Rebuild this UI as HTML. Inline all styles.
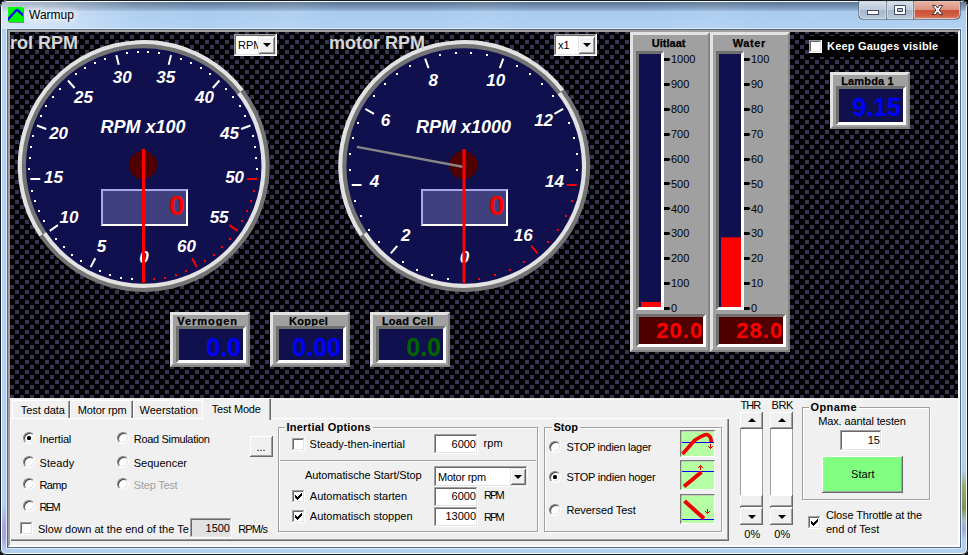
<!DOCTYPE html>
<html><head><meta charset="utf-8"><title>Warmup</title>
<style>
*{box-sizing:border-box;margin:0;padding:0}
html,body{width:968px;height:555px;overflow:hidden;background:#000}
body{font-family:"Liberation Sans",Arial,sans-serif;font-size:11px;color:#000;position:relative}
.abs,.abs *{position:absolute}
#win{position:absolute;left:0;top:0;width:968px;height:555px;border-radius:7px 7px 6px 6px;background:#b2d1f1;overflow:hidden;
 box-shadow:inset 0 0 0 1px #141c26, inset 0 0 0 2px #f8fbfe}
#tbar{position:absolute;left:2px;top:2px;width:964px;height:27px;
 background:linear-gradient(180deg,#5b7595 0,#6a85a6 3px,#7f9bbc 6px,#8eabcd 8px,#a8caee 9.5px,#afd0f2 27px)}
#tbarx{position:absolute;left:2px;top:2px;width:964px;height:27px;
 background:linear-gradient(100deg,rgba(255,255,255,.5) 0,rgba(255,255,255,.42) 50px,rgba(255,255,255,.1) 130px,rgba(255,255,255,.02) 200px,rgba(255,255,255,.1) 290px,rgba(255,255,255,0) 330px,rgba(255,255,255,0) 420px,rgba(255,255,255,.08) 480px,rgba(255,255,255,0) 520px,rgba(255,255,255,0) 640px,rgba(255,255,255,.08) 700px,rgba(255,255,255,0) 760px,rgba(255,255,255,.05) 964px)}
#title{position:absolute;left:29px;top:8px;font-size:12px;color:#000;text-shadow:0 0 6px #fff,0 0 8px #fff,0 0 10px #fff}
#client{position:absolute;left:7px;top:29px;width:954px;height:519px;background:#f0f0f0;border:1px solid #566a80;box-shadow:0 0 0 1px #dceafa}
#cedge{position:absolute;left:8px;top:30px;width:952px;height:517px;border-style:solid;border-width:2px;border-color:#a0a0a0 #fff #fff #a0a0a0}
#gp{position:absolute;left:10px;top:32px;width:948px;height:366px;background:#000;overflow:hidden}
.gsvg{position:absolute;left:0;top:0}
.gl{font:italic bold 18px "Liberation Sans",Arial,sans-serif;fill:#fff}
.gn{font:italic bold 17px "Liberation Sans",Arial,sans-serif;fill:#fff}
.lcd{font:bold 28px "Liberation Sans",Arial,sans-serif;fill:#ff0000}
.pt{font:bold 11px "Liberation Sans",Arial,sans-serif;fill:#000;stroke:#000;stroke-width:.25px}
.sc{font:11px "Liberation Sans",Arial,sans-serif;fill:#000}
.rl{font:bold 22px "Liberation Sans",Arial,sans-serif;fill:#ff0000;letter-spacing:1px}
.dv{font-weight:bold;font-family:"Liberation Sans",Arial,sans-serif}
.gt{position:absolute;font-weight:bold;font-size:18px;line-height:20px;color:#d6d6d6;white-space:nowrap}
.combo{position:absolute;width:43px;height:22px;background:#fff;box-shadow:inset -1px -1px 0 #fff, inset 1px 1px 0 #a0a0a0, inset -2px -2px 0 #e3e3e3, inset 2px 2px 0 #696969;overflow:hidden}
.combo span{position:absolute;left:4px;top:5px;font-size:11px;line-height:13px;white-space:nowrap}
.cbtn{position:absolute;right:2px;top:2px;width:17px;bottom:2px;background:#f0f0f0;box-shadow:inset 1px 1px 0 #e3e3e3, inset -1px -1px 0 #696969, inset 2px 2px 0 #fff, inset -2px -2px 0 #a0a0a0}
.cbtn i{position:absolute;left:5px;top:7px;width:0;height:0;border:4px solid transparent;border-top:4px solid #000;border-bottom:0}
.chk{position:absolute;width:13px;height:13px;background:#fff;box-shadow:inset -1px -1px 0 #fff, inset 1px 1px 0 #a0a0a0, inset -2px -2px 0 #e3e3e3, inset 2px 2px 0 #696969}

.t{position:absolute;font-size:11px;line-height:13px;white-space:nowrap;color:#000}
.t.b{font-weight:bold}
.t.dis{color:#a0a0a0}
.rad{position:absolute;width:12px;height:12px;border-radius:50%;background:#fff;border:1px solid;border-color:#808080 #fff #fff #808080;box-shadow:inset 1px 1px 0 #404040, inset -1px -1px 0 #e3e3e3;transform:rotate(0deg)}
.rad i{position:absolute;left:3px;top:3px;width:4px;height:4px;background:#000;border-radius:1.5px}
.edit{position:absolute;box-shadow:inset -1px -1px 0 #fff, inset 1px 1px 0 #a0a0a0, inset -2px -2px 0 #e3e3e3, inset 2px 2px 0 #696969}
.grp{position:absolute;border:1px solid #a0a0a0;box-shadow:inset 1px 1px 0 #fff, 1px 1px 0 #fff}
.sep{position:absolute;height:2px;border-top:1px solid #a0a0a0;border-bottom:1px solid #fff}
.btn{position:absolute;background:#f0f0f0;box-shadow:inset -1px -1px 0 #696969, inset 1px 1px 0 #fff, inset -2px -2px 0 #a0a0a0}
.btn i{position:absolute;width:0;height:0;border:4px solid transparent}
.btn i.up{border-bottom:4px solid #000;border-top:0}
.btn i.dn{border-top:4px solid #000;border-bottom:0}
#tabbody{position:absolute;left:10px;top:418px;width:719px;height:123px;box-shadow:inset 1px 1px 0 #fff, inset -1px -1px 0 #696969, inset -2px -2px 0 #a0a0a0}
.tab{position:absolute;background:#f0f0f0;box-shadow:inset 1px 1px 0 #fff, inset -1px 0 0 #696969, inset -2px 0 0 #a0a0a0}
.tab.sel{}
</style></head><body>
<div id="win">
<div id="tbar"></div><div id="tbarx"></div>
<div id="title">Warmup</div>
<div id="client"></div>
<div id="cedge"></div>
<svg class="gsvg" width="968" height="555" viewBox="0 0 968 555">
<defs><pattern id="cf" x="0" y="0" width="10" height="10" patternUnits="userSpaceOnUse">
<rect x="5" y="0" width="4" height="4" fill="#363652"/><rect x="0" y="5" width="4" height="4" fill="#363652"/></pattern></defs>
<rect x="10" y="32" width="948" height="366" fill="#000"/>
<rect x="10" y="32" width="948" height="366" fill="url(#cf)"/>
</svg>
<svg class="gsvg" width="968" height="555" viewBox="0 0 968 555">
<path d="M243.80 89.47 A126 126 0 0 0 39.49 236.82 Z" fill="#e2e2e2"/>
<path d="M243.80 89.47 A126 126 0 1 1 39.49 236.82 Z" fill="#747474"/>
<path d="M240.54 91.96 A121.9 121.9 0 0 0 42.88 234.52 Z" fill="#747474"/>
<path d="M240.54 91.96 A121.9 121.9 0 1 1 42.88 234.52 Z" fill="#e2e2e2"/>
<circle cx="143.7" cy="166.0" r="117.8" fill="#10104e"/>
<rect x="131" y="278" width="2" height="2" fill="#ffffff"/>
<rect x="120" y="277" width="2" height="2" fill="#ffffff"/>
<rect x="109" y="274" width="2" height="2" fill="#ffffff"/>
<rect x="99" y="270" width="2" height="2" fill="#ffffff"/>
<line x1="95.28" y1="258.26" x2="90.63" y2="267.12" stroke="#ffffff" stroke-width="2"/>
<rect x="80" y="260" width="2" height="2" fill="#ffffff"/>
<rect x="71" y="254" width="2" height="2" fill="#ffffff"/>
<rect x="63" y="246" width="2" height="2" fill="#ffffff"/>
<rect x="55" y="238" width="2" height="2" fill="#ffffff"/>
<line x1="57.95" y1="225.19" x2="49.72" y2="230.87" stroke="#ffffff" stroke-width="2"/>
<rect x="43" y="220" width="2" height="2" fill="#ffffff"/>
<rect x="38" y="210" width="2" height="2" fill="#ffffff"/>
<rect x="34" y="200" width="2" height="2" fill="#ffffff"/>
<rect x="31" y="190" width="2" height="2" fill="#ffffff"/>
<line x1="40.26" y1="179.00" x2="30.33" y2="179.00" stroke="#ffffff" stroke-width="2"/>
<rect x="28" y="168" width="2" height="2" fill="#ffffff"/>
<rect x="29" y="157" width="2" height="2" fill="#ffffff"/>
<rect x="30" y="146" width="2" height="2" fill="#ffffff"/>
<rect x="32" y="135" width="2" height="2" fill="#ffffff"/>
<line x1="46.27" y1="129.05" x2="36.92" y2="125.50" stroke="#ffffff" stroke-width="2"/>
<rect x="40" y="115" width="2" height="2" fill="#ffffff"/>
<rect x="45" y="105" width="2" height="2" fill="#ffffff"/>
<rect x="52" y="96" width="2" height="2" fill="#ffffff"/>
<rect x="59" y="88" width="2" height="2" fill="#ffffff"/>
<line x1="74.60" y1="88.01" x2="67.97" y2="80.52" stroke="#ffffff" stroke-width="2"/>
<rect x="75" y="73" width="2" height="2" fill="#ffffff"/>
<rect x="84" y="67" width="2" height="2" fill="#ffffff"/>
<rect x="94" y="62" width="2" height="2" fill="#ffffff"/>
<rect x="104" y="58" width="2" height="2" fill="#ffffff"/>
<line x1="118.76" y1="64.83" x2="116.37" y2="55.12" stroke="#ffffff" stroke-width="2"/>
<rect x="126" y="52" width="2" height="2" fill="#ffffff"/>
<rect x="137" y="51" width="2" height="2" fill="#ffffff"/>
<rect x="147" y="51" width="2" height="2" fill="#ffffff"/>
<rect x="158" y="52" width="2" height="2" fill="#ffffff"/>
<line x1="168.64" y1="64.83" x2="171.03" y2="55.12" stroke="#ffffff" stroke-width="2"/>
<rect x="180" y="58" width="2" height="2" fill="#ffffff"/>
<rect x="190" y="62" width="2" height="2" fill="#ffffff"/>
<rect x="200" y="67" width="2" height="2" fill="#ffffff"/>
<rect x="209" y="73" width="2" height="2" fill="#ffffff"/>
<line x1="212.80" y1="88.01" x2="219.43" y2="80.52" stroke="#ffffff" stroke-width="2"/>
<rect x="225" y="88" width="2" height="2" fill="#ffffff"/>
<rect x="232" y="96" width="2" height="2" fill="#ffffff"/>
<rect x="239" y="105" width="2" height="2" fill="#ffffff"/>
<rect x="244" y="115" width="2" height="2" fill="#ffffff"/>
<line x1="241.13" y1="129.05" x2="250.48" y2="125.50" stroke="#ffffff" stroke-width="2"/>
<rect x="252" y="135" width="2" height="2" fill="#ffffff"/>
<rect x="254" y="146" width="2" height="2" fill="#ffffff"/>
<rect x="255" y="157" width="2" height="2" fill="#ffffff"/>
<rect x="256" y="168" width="2" height="2" fill="#ffffff"/>
<line x1="247.14" y1="179.00" x2="257.07" y2="179.00" stroke="#ff0000" stroke-width="2"/>
<rect x="253" y="190" width="2" height="2" fill="#ff0000"/>
<rect x="250" y="200" width="2" height="2" fill="#ff0000"/>
<rect x="246" y="210" width="2" height="2" fill="#ff0000"/>
<rect x="241" y="220" width="2" height="2" fill="#ff0000"/>
<line x1="229.45" y1="225.19" x2="237.68" y2="230.87" stroke="#ff0000" stroke-width="2"/>
<rect x="229" y="238" width="2" height="2" fill="#ff0000"/>
<rect x="221" y="246" width="2" height="2" fill="#ff0000"/>
<rect x="213" y="254" width="2" height="2" fill="#ff0000"/>
<rect x="204" y="260" width="2" height="2" fill="#ff0000"/>
<line x1="192.12" y1="258.26" x2="196.77" y2="267.12" stroke="#ff0000" stroke-width="2"/>
<rect x="185" y="270" width="2" height="2" fill="#ff0000"/>
<rect x="175" y="274" width="2" height="2" fill="#ff0000"/>
<rect x="164" y="277" width="2" height="2" fill="#ff0000"/>
<rect x="153" y="278" width="2" height="2" fill="#ff0000"/>
<text x="144.0" y="262.8" text-anchor="middle" class="gn">0</text>
<text x="101.6" y="252.3" text-anchor="middle" class="gn">5</text>
<text x="68.9" y="223.4" text-anchor="middle" class="gn">10</text>
<text x="53.4" y="182.5" text-anchor="middle" class="gn">15</text>
<text x="58.6" y="139.1" text-anchor="middle" class="gn">20</text>
<text x="83.5" y="103.2" text-anchor="middle" class="gn">25</text>
<text x="122.2" y="82.9" text-anchor="middle" class="gn">30</text>
<text x="165.8" y="82.9" text-anchor="middle" class="gn">35</text>
<text x="204.5" y="103.2" text-anchor="middle" class="gn">40</text>
<text x="229.4" y="139.1" text-anchor="middle" class="gn">45</text>
<text x="234.6" y="182.5" text-anchor="middle" class="gn">50</text>
<text x="219.1" y="223.4" text-anchor="middle" class="gn">55</text>
<text x="186.4" y="252.3" text-anchor="middle" class="gn">60</text>
<text x="143" y="133.2" text-anchor="middle" class="gl">RPM x100</text>
<rect x="101" y="189.0" width="87" height="37" fill="#ffffff"/>
<path d="M101 189.0 h87 l-2 2 h-83 v33 l-2 2 Z" fill="#a8a8ee"/>
<rect x="103" y="191.0" width="83" height="33" fill="#40407e"/>
<text x="184.5" y="214.6" text-anchor="end" class="lcd">0</text>
<circle cx="143" cy="165.0" r="14" fill="#500000"/>
<path d="M142 149.0 h3 v133 l-1.5 2 l-1.5 -2 Z" fill="#ff0000"/>
<path d="M564.30 89.47 A126 126 0 0 0 359.99 236.82 Z" fill="#e2e2e2"/>
<path d="M564.30 89.47 A126 126 0 1 1 359.99 236.82 Z" fill="#747474"/>
<path d="M561.04 91.96 A121.9 121.9 0 0 0 363.38 234.52 Z" fill="#747474"/>
<path d="M561.04 91.96 A121.9 121.9 0 1 1 363.38 234.52 Z" fill="#e2e2e2"/>
<circle cx="464.2" cy="166.0" r="117.8" fill="#10104e"/>
<rect x="447" y="278" width="2" height="2" fill="#ffffff"/>
<rect x="431" y="274" width="2" height="2" fill="#ffffff"/>
<rect x="416" y="269" width="2" height="2" fill="#ffffff"/>
<rect x="402" y="261" width="2" height="2" fill="#ffffff"/>
<line x1="397.22" y1="245.82" x2="390.79" y2="253.48" stroke="#ffffff" stroke-width="2"/>
<rect x="378" y="241" width="2" height="2" fill="#ffffff"/>
<rect x="368" y="229" width="2" height="2" fill="#ffffff"/>
<rect x="360" y="215" width="2" height="2" fill="#ffffff"/>
<rect x="354" y="200" width="2" height="2" fill="#ffffff"/>
<line x1="361.58" y1="185.00" x2="351.73" y2="185.00" stroke="#ffffff" stroke-width="2"/>
<rect x="349" y="169" width="2" height="2" fill="#ffffff"/>
<rect x="349" y="153" width="2" height="2" fill="#ffffff"/>
<rect x="352" y="137" width="2" height="2" fill="#ffffff"/>
<rect x="357" y="122" width="2" height="2" fill="#ffffff"/>
<line x1="373.96" y1="113.90" x2="365.30" y2="108.90" stroke="#ffffff" stroke-width="2"/>
<rect x="373" y="95" width="2" height="2" fill="#ffffff"/>
<rect x="384" y="83" width="2" height="2" fill="#ffffff"/>
<rect x="396" y="73" width="2" height="2" fill="#ffffff"/>
<rect x="409" y="65" width="2" height="2" fill="#ffffff"/>
<line x1="428.56" y1="68.08" x2="425.14" y2="58.69" stroke="#ffffff" stroke-width="2"/>
<rect x="439" y="54" width="2" height="2" fill="#ffffff"/>
<rect x="455" y="52" width="2" height="2" fill="#ffffff"/>
<rect x="470" y="52" width="2" height="2" fill="#ffffff"/>
<rect x="486" y="54" width="2" height="2" fill="#ffffff"/>
<line x1="499.84" y1="68.08" x2="503.26" y2="58.69" stroke="#ffffff" stroke-width="2"/>
<rect x="516" y="65" width="2" height="2" fill="#ffffff"/>
<rect x="529" y="73" width="2" height="2" fill="#ffffff"/>
<rect x="541" y="83" width="2" height="2" fill="#ffffff"/>
<rect x="552" y="95" width="2" height="2" fill="#ffffff"/>
<line x1="554.44" y1="113.90" x2="563.10" y2="108.90" stroke="#ffffff" stroke-width="2"/>
<rect x="568" y="122" width="2" height="2" fill="#ffffff"/>
<rect x="573" y="137" width="2" height="2" fill="#ffffff"/>
<rect x="576" y="153" width="2" height="2" fill="#ffffff"/>
<rect x="576" y="169" width="2" height="2" fill="#ffffff"/>
<line x1="566.82" y1="185.00" x2="576.67" y2="185.00" stroke="#ff0000" stroke-width="2"/>
<rect x="571" y="200" width="2" height="2" fill="#ff0000"/>
<rect x="565" y="215" width="2" height="2" fill="#ff0000"/>
<rect x="557" y="229" width="2" height="2" fill="#ff0000"/>
<rect x="547" y="241" width="2" height="2" fill="#ff0000"/>
<line x1="531.18" y1="245.82" x2="537.61" y2="253.48" stroke="#ff0000" stroke-width="2"/>
<rect x="523" y="261" width="2" height="2" fill="#ff0000"/>
<rect x="509" y="269" width="2" height="2" fill="#ff0000"/>
<rect x="494" y="274" width="2" height="2" fill="#ff0000"/>
<rect x="478" y="278" width="2" height="2" fill="#ff0000"/>
<text x="464.5" y="262.8" text-anchor="middle" class="gn">0</text>
<text x="405.8" y="241.4" text-anchor="middle" class="gn">2</text>
<text x="374.6" y="187.4" text-anchor="middle" class="gn">4</text>
<text x="385.4" y="125.9" text-anchor="middle" class="gn">6</text>
<text x="433.3" y="85.7" text-anchor="middle" class="gn">8</text>
<text x="495.7" y="85.7" text-anchor="middle" class="gn">10</text>
<text x="543.6" y="125.8" text-anchor="middle" class="gn">12</text>
<text x="554.4" y="187.4" text-anchor="middle" class="gn">14</text>
<text x="523.2" y="241.4" text-anchor="middle" class="gn">16</text>
<text x="463.5" y="133.2" text-anchor="middle" class="gl">RPM x1000</text>
<rect x="421" y="189.0" width="87" height="37" fill="#ffffff"/>
<path d="M421 189.0 h87 l-2 2 h-83 v33 l-2 2 Z" fill="#a8a8ee"/>
<rect x="423" y="191.0" width="83" height="33" fill="#40407e"/>
<text x="504.5" y="214.6" text-anchor="end" class="lcd">0</text>
<circle cx="463.5" cy="165.0" r="14" fill="#500000"/>
<line x1="462.5" y1="166.7" x2="356.83" y2="146.93" stroke="#858585" stroke-width="2.4"/>
<path d="M462.5 149.0 h3 v133 l-1.5 2 l-1.5 -2 Z" fill="#ff0000"/>
<rect x="630" y="32" width="80" height="320" fill="#858585"/><path d="M630 32 h80 l-3 3 h-74 v314 l-3 3 Z" fill="#e3e3e3"/><rect x="633" y="35" width="75" height="315" fill="#a0a0a0"/>
<text x="651.8" y="47" textLength="33.7" lengthAdjust="spacing" class="pt">Uitlaat</text>
<rect x="636" y="51" width="28" height="259" fill="#ffffff"/><path d="M636 51 h28 l-3 3 h-22 v253 l-3 3 Z" fill="#707070"/><rect x="639" y="54" width="22" height="253" fill="#10104e"/>
<rect x="641" y="302.0" width="20" height="5.0" fill="#ff0000"/>
<path d="M664 307 h5 l1.5 1.5 l-1.5 1.5 h-5 Z" fill="#000"/>
<text x="671" y="312.1" class="sc">0</text>
<path d="M664 282 h5 l1.5 1.5 l-1.5 1.5 h-5 Z" fill="#000"/>
<text x="671" y="287.2" class="sc">100</text>
<path d="M664 257 h5 l1.5 1.5 l-1.5 1.5 h-5 Z" fill="#000"/>
<text x="671" y="262.3" class="sc">200</text>
<path d="M664 232 h5 l1.5 1.5 l-1.5 1.5 h-5 Z" fill="#000"/>
<text x="671" y="237.4" class="sc">300</text>
<path d="M664 207 h5 l1.5 1.5 l-1.5 1.5 h-5 Z" fill="#000"/>
<text x="671" y="212.5" class="sc">400</text>
<path d="M664 182 h5 l1.5 1.5 l-1.5 1.5 h-5 Z" fill="#000"/>
<text x="671" y="187.5" class="sc">500</text>
<path d="M664 158 h5 l1.5 1.5 l-1.5 1.5 h-5 Z" fill="#000"/>
<text x="671" y="162.6" class="sc">600</text>
<path d="M664 133 h5 l1.5 1.5 l-1.5 1.5 h-5 Z" fill="#000"/>
<text x="671" y="137.7" class="sc">700</text>
<path d="M664 108 h5 l1.5 1.5 l-1.5 1.5 h-5 Z" fill="#000"/>
<text x="671" y="112.8" class="sc">800</text>
<path d="M664 83 h5 l1.5 1.5 l-1.5 1.5 h-5 Z" fill="#000"/>
<text x="671" y="87.9" class="sc">900</text>
<path d="M664 58 h5 l1.5 1.5 l-1.5 1.5 h-5 Z" fill="#000"/>
<text x="671" y="63.0" class="sc">1000</text>
<rect x="636" y="314" width="70" height="33" fill="#ffffff"/><path d="M636 314 h70 l-3 3 h-64 v27 l-3 3 Z" fill="#707070"/><rect x="639" y="317" width="64" height="27" fill="#500000"/>
<text x="703.2" y="337.9" text-anchor="end" class="rl">20.0</text>
<rect x="710" y="32" width="80" height="320" fill="#858585"/><path d="M710 32 h80 l-3 3 h-74 v314 l-3 3 Z" fill="#e3e3e3"/><rect x="713" y="35" width="75" height="315" fill="#a0a0a0"/>
<text x="732.7" y="47" textLength="32.6" lengthAdjust="spacing" class="pt">Water</text>
<rect x="716" y="51" width="28" height="259" fill="#ffffff"/><path d="M716 51 h28 l-3 3 h-22 v253 l-3 3 Z" fill="#707070"/><rect x="719" y="54" width="22" height="253" fill="#10104e"/>
<rect x="721" y="237.3" width="20" height="69.7" fill="#ff0000"/>
<path d="M744 307 h5 l1.5 1.5 l-1.5 1.5 h-5 Z" fill="#000"/>
<text x="751" y="312.1" class="sc">0</text>
<path d="M744 282 h5 l1.5 1.5 l-1.5 1.5 h-5 Z" fill="#000"/>
<text x="751" y="287.2" class="sc">10</text>
<path d="M744 257 h5 l1.5 1.5 l-1.5 1.5 h-5 Z" fill="#000"/>
<text x="751" y="262.3" class="sc">20</text>
<path d="M744 232 h5 l1.5 1.5 l-1.5 1.5 h-5 Z" fill="#000"/>
<text x="751" y="237.4" class="sc">30</text>
<path d="M744 207 h5 l1.5 1.5 l-1.5 1.5 h-5 Z" fill="#000"/>
<text x="751" y="212.5" class="sc">40</text>
<path d="M744 182 h5 l1.5 1.5 l-1.5 1.5 h-5 Z" fill="#000"/>
<text x="751" y="187.5" class="sc">50</text>
<path d="M744 158 h5 l1.5 1.5 l-1.5 1.5 h-5 Z" fill="#000"/>
<text x="751" y="162.6" class="sc">60</text>
<path d="M744 133 h5 l1.5 1.5 l-1.5 1.5 h-5 Z" fill="#000"/>
<text x="751" y="137.7" class="sc">70</text>
<path d="M744 108 h5 l1.5 1.5 l-1.5 1.5 h-5 Z" fill="#000"/>
<text x="751" y="112.8" class="sc">80</text>
<path d="M744 83 h5 l1.5 1.5 l-1.5 1.5 h-5 Z" fill="#000"/>
<text x="751" y="87.9" class="sc">90</text>
<path d="M744 58 h5 l1.5 1.5 l-1.5 1.5 h-5 Z" fill="#000"/>
<text x="751" y="63.0" class="sc">100</text>
<rect x="716" y="314" width="70" height="33" fill="#ffffff"/><path d="M716 314 h70 l-3 3 h-64 v27 l-3 3 Z" fill="#707070"/><rect x="719" y="317" width="64" height="27" fill="#500000"/>
<text x="783.2" y="337.9" text-anchor="end" class="rl">28.0</text>
<rect x="170" y="312" width="80" height="55" fill="#858585"/><path d="M170 312 h80 l-3 3 h-74 v49 l-3 3 Z" fill="#e3e3e3"/><rect x="173" y="315" width="75" height="50" fill="#a0a0a0"/>
<text x="177.3" y="324.6" textLength="59.8" lengthAdjust="spacing" class="pt">Vermogen</text>
<rect x="176" y="326" width="70" height="37" fill="#ffffff"/><path d="M176 326 h70 l-3 3 h-64 v31 l-3 3 Z" fill="#707070"/><rect x="179" y="329" width="64" height="31" fill="#10104e"/>
<text x="241" y="356" text-anchor="end" class="dv" fill="#0000ff" font-size="25">0.0</text>
<rect x="270" y="312" width="80" height="55" fill="#858585"/><path d="M270 312 h80 l-3 3 h-74 v49 l-3 3 Z" fill="#e3e3e3"/><rect x="273" y="315" width="75" height="50" fill="#a0a0a0"/>
<text x="288.9" y="324.6" textLength="39.0" lengthAdjust="spacing" class="pt">Koppel</text>
<rect x="276" y="326" width="70" height="37" fill="#ffffff"/><path d="M276 326 h70 l-3 3 h-64 v31 l-3 3 Z" fill="#707070"/><rect x="279" y="329" width="64" height="31" fill="#10104e"/>
<text x="341" y="356" text-anchor="end" class="dv" fill="#0000ff" font-size="25">0.00</text>
<rect x="370" y="312" width="80" height="55" fill="#858585"/><path d="M370 312 h80 l-3 3 h-74 v49 l-3 3 Z" fill="#e3e3e3"/><rect x="373" y="315" width="75" height="50" fill="#a0a0a0"/>
<text x="381.9" y="324.6" textLength="51.4" lengthAdjust="spacing" class="pt">Load Cell</text>
<rect x="376" y="326" width="70" height="37" fill="#ffffff"/><path d="M376 326 h70 l-3 3 h-64 v31 l-3 3 Z" fill="#707070"/><rect x="379" y="329" width="64" height="31" fill="#10104e"/>
<text x="441" y="356" text-anchor="end" class="dv" fill="#006400" font-size="25">0.0</text>
<rect x="830" y="72" width="80" height="57" fill="#858585"/><path d="M830 72 h80 l-3 3 h-74 v51 l-3 3 Z" fill="#e3e3e3"/><rect x="833" y="75" width="75" height="52" fill="#a0a0a0"/>
<text x="841.2" y="84.6" textLength="52.5" lengthAdjust="spacing" class="pt">Lambda 1</text>
<rect x="836" y="86" width="70" height="39" fill="#ffffff"/><path d="M836 86 h70 l-3 3 h-64 v33 l-3 3 Z" fill="#707070"/><rect x="839" y="89" width="64" height="33" fill="#10104e"/>
<text x="901" y="115.8" text-anchor="end" class="dv" fill="#0000ff" font-size="25">9.15</text>
</svg>
<div class="gt" style="left:10px;top:33px">rol RPM</div>
<div class="gt" style="left:329px;top:33px">motor RPM</div>
<div class="combo" style="left:234px;top:34px"><span>RPM</span><div class="cbtn"><i></i></div></div>
<div class="combo" style="left:554px;top:34px"><span>x1</span><div class="cbtn"><i></i></div></div>
<div style="position:absolute;left:809px;top:36px;width:149px;height:21px;background:#000"></div>
<div class="chk" style="left:809px;top:40px"></div>
<div style="position:absolute;left:827px;top:40px;font-weight:bold;font-size:11px;line-height:13px;color:#fff;white-space:nowrap;letter-spacing:0.2px">Keep Gauges visible</div>
<svg class="gsvg" width="968" height="32" viewBox="0 0 968 32">
<defs>
<linearGradient id="gb" x1="0" y1="0" x2="0" y2="1"><stop offset="0" stop-color="#d6dfea"/><stop offset="0.47" stop-color="#bccadb"/><stop offset="0.5" stop-color="#a3b5ca"/><stop offset="1" stop-color="#b9c9dc"/></linearGradient>
<linearGradient id="gr" x1="0" y1="0" x2="0" y2="1"><stop offset="0" stop-color="#e9b3a4"/><stop offset="0.47" stop-color="#dd9280"/><stop offset="0.5" stop-color="#c9503a"/><stop offset="0.85" stop-color="#d05f45"/><stop offset="1" stop-color="#dc8a6a"/></linearGradient>
</defs>
<!-- app icon -->
<rect x="9" y="8" width="15" height="15" fill="#7d8590"/>
<rect x="8" y="7" width="15" height="15" fill="#00ff00"/>
<clipPath id="ic"><rect x="8" y="7" width="15" height="15"/></clipPath><path clip-path="url(#ic)" d="M7 20.5 L16 10.5 Q17 9.6 18 10.5 L24 16" stroke="#1010f0" stroke-width="2.4" fill="none"/>
<!-- caption buttons -->
<path d="M858.5 1 V14.5 Q858.5 19.5 863.5 19.5 H955.5 Q960.5 19.5 960.5 14.5 V1 Z" fill="#3c4a5c"/>
<path d="M859.5 1.5 V14.5 Q859.5 18.5 863.5 18.5 H886 V1.5 Z" fill="url(#gb)" stroke="#f2f6fa" stroke-opacity=".75" stroke-width="1"/>
<path d="M887.5 1.5 H913 V18.5 H887.5 Z" fill="url(#gb)" stroke="#f2f6fa" stroke-opacity=".75" stroke-width="1"/>
<path d="M914.5 1.5 H959.5 V14.5 Q959.5 18.5 955.5 18.5 H914.5 Z" fill="url(#gr)" stroke="#f6cfc4" stroke-opacity=".8" stroke-width="1"/>
<rect x="867.5" y="10.5" width="11" height="4" fill="#fff" stroke="#3f4a5a" stroke-width="1"/>
<path d="M894.5 5.5 h11 v9 h-11 Z M897.5 8.5 v3 h5 v-3 Z" fill="#fff" fill-rule="evenodd" stroke="#3f4a5a" stroke-width="1"/>
<path d="M932.5 5.5 h3.2 l1.9 2.6 l1.9 -2.6 h3.2 l-3.4 4.5 l3.4 4.5 h-3.2 l-1.9 -2.6 l-1.9 2.6 h-3.2 l3.4 -4.5 Z" fill="#fff" stroke="#4a3030" stroke-width="1" stroke-linejoin="round"/>
</svg>
<div style="position:absolute;left:962px;top:470px;width:4px;height:70px;background:linear-gradient(180deg,rgba(140,155,80,0) 0,rgba(150,165,90,.85) 22%,rgba(125,140,70,.9) 55%,rgba(140,150,100,.3) 72%,rgba(150,140,200,.6) 84%,rgba(150,140,200,0) 100%)"></div>
<div style="position:absolute;left:2px;top:505px;width:4px;height:45px;background:linear-gradient(180deg,rgba(160,150,215,0) 0,rgba(165,155,215,.8) 45%,rgba(165,155,215,.8) 75%,rgba(160,150,215,0) 100%)"></div>
<div id="tabbody"></div>
<div class="tab" style="left:12px;top:400px;width:58px;height:18px"></div>
<div class="tab" style="left:70px;top:400px;width:63px;height:18px"></div>
<div class="tab" style="left:133px;top:400px;width:71px;height:18px"></div>
<div class="tab sel" style="left:202px;top:398px;width:69px;height:22px"></div>
<div class="t" style="left:20.8px;top:404px;letter-spacing:-0.070px;">Test data</div>
<div class="t" style="left:77.8px;top:404px;letter-spacing:-0.152px;">Motor rpm</div>
<div class="t" style="left:139.6px;top:404px;letter-spacing:-0.019px;">Weerstation</div>
<div class="t" style="left:211.8px;top:403px;letter-spacing:-0.208px;">Test Mode</div>
<div class="rad" style="left:23px;top:432px"><i></i></div>
<div class="t" style="left:39.5px;top:433px;letter-spacing:-0.174px;">Inertial</div>
<div class="rad" style="left:23px;top:456px"></div>
<div class="t" style="left:39.5px;top:457px;letter-spacing:0.091px;">Steady</div>
<div class="rad" style="left:23px;top:478px"></div>
<div class="t" style="left:39.5px;top:479px;letter-spacing:-0.614px;">Ramp</div>
<div class="rad" style="left:23px;top:500px"></div>
<div class="t" style="left:39.5px;top:501px;letter-spacing:-1.672px;">REM</div>
<div class="rad" style="left:117px;top:432px"></div>
<div class="t" style="left:133.8px;top:433px;letter-spacing:-0.329px;">Road Simulation</div>
<div class="rad" style="left:117px;top:456px"></div>
<div class="t" style="left:133.8px;top:457px;letter-spacing:-0.013px;">Sequencer</div>
<div class="rad" style="left:117px;top:478px"></div>
<div class="t dis" style="left:133.8px;top:479px;letter-spacing:-0.222px;">Step Test</div>
<div class="chk" style="left:20px;top:522px"></div>
<div class="t" style="left:38px;top:523px;width:151px;overflow:hidden;letter-spacing:0.021px">Slow down at the end of the Test</div>
<div class="edit" style="left:190px;top:518px;width:42px;height:20px;background:#e1e1e1"></div><div class="t" style="left:170px;width:60px;text-align:right;top:522px;">1500</div>
<div class="t" style="left:238.2px;top:523px;letter-spacing:-0.800px;">RPM/s</div>
<div class="btn" style="left:250px;top:436px;width:23px;height:21px"></div>
<div class="t" style="left:256.5px;top:441px;">...</div>
<div class="grp" style="left:278px;top:427px;width:260px;height:105px"></div><div style="position:absolute;left:285px;top:427px;width:88px;height:2px;background:#f0f0f0"></div><div class="t b" style="left:286.5px;top:421px;letter-spacing:0.228px;">Inertial Options</div>
<div class="sep" style="left:280px;top:460px;width:256px"></div>
<div class="chk" style="left:292px;top:438px"></div>
<div class="t" style="left:309.6px;top:438px;letter-spacing:-0.004px;">Steady-then-inertial</div>
<div class="edit" style="left:434px;top:434px;width:44px;height:20px;background:#fff"></div><div class="t" style="left:416px;width:60px;text-align:right;top:438px;">6000</div>
<div class="t" style="left:483.5px;top:437px;letter-spacing:0.128px;">rpm</div>
<div class="t" style="left:305px;top:469px;letter-spacing:-0.087px;">Automatische Start/Stop</div>
<div class="edit" style="left:434px;top:487px;width:44px;height:20px;background:#fff"></div><div class="t" style="left:416px;width:60px;text-align:right;top:490px;">6000</div>
<div class="t" style="left:484px;top:489px;letter-spacing:-1.922px;">RPM</div>
<div class="edit" style="left:434px;top:507px;width:44px;height:20px;background:#fff"></div><div class="t" style="left:416px;width:60px;text-align:right;top:510px;">13000</div>
<div class="t" style="left:484px;top:511px;letter-spacing:-1.922px;">RPM</div>
<div class="combo" style="left:434px;top:466px;width:94px;height:21px"><span style="top:5px;letter-spacing:-0.25px">Motor rpm</span><div class="cbtn" style="width:16px"><i style="left:4px;top:7px"></i></div></div>
<div class="chk" style="left:292px;top:490px"><svg width="13" height="13" viewBox="0 0 13 13" style="position:absolute;left:0;top:0"><path d="M3 5h1v3h-1zM4 6h1v3h-1zM5 7h1v3h-1zM6 6h1v3h-1zM7 5h1v3h-1zM8 4h1v3h-1zM9 3h1v3h-1z" fill="#000" shape-rendering="crispEdges"/></svg></div>
<div class="t" style="left:309.8px;top:490px;letter-spacing:0.005px;">Automatisch starten</div>
<div class="chk" style="left:292px;top:510px"><svg width="13" height="13" viewBox="0 0 13 13" style="position:absolute;left:0;top:0"><path d="M3 5h1v3h-1zM4 6h1v3h-1zM5 7h1v3h-1zM6 6h1v3h-1zM7 5h1v3h-1zM8 4h1v3h-1zM9 3h1v3h-1z" fill="#000" shape-rendering="crispEdges"/></svg></div>
<div class="t" style="left:309.8px;top:510px;letter-spacing:0.004px;">Automatisch stoppen</div>
<div class="grp" style="left:544px;top:427px;width:178px;height:105px"></div><div style="position:absolute;left:552px;top:427px;width:28px;height:2px;background:#f0f0f0"></div><div class="t b" style="left:553.5px;top:421px;letter-spacing:0.021px;">Stop</div>
<div class="rad" style="left:549px;top:441px"></div>
<div class="t" style="left:566.4px;top:441px;letter-spacing:-0.280px;">STOP indien lager</div>
<div class="rad" style="left:549px;top:471px"><i></i></div>
<div class="t" style="left:566.4px;top:471px;letter-spacing:-0.247px;">STOP indien hoger</div>
<div class="rad" style="left:549px;top:504px"></div>
<div class="t" style="left:566.4px;top:504px;letter-spacing:-0.052px;">Reversed Test</div>
<svg style="position:absolute;left:680px;top:430px" width="35" height="27" viewBox="0 0 35 27"><rect width="35" height="27" fill="#fff"/><path d="M0 0 H35 L34 1.6 H1.6 V26 L0 27 Z" fill="#7a7a7a"/><rect x="1.6" y="1.6" width="32.4" height="24.4" fill="#b6ffa4"/><path d="M2 12.5 H34" stroke="#0000ff" stroke-width="1"/><path d="M2.5 24 L14.5 10.5 L20 7 L24 5.2 Q26.5 4 28.5 5.2 Q31.3 7 31.3 12" stroke="#f00000" stroke-width="3.6" fill="none"/><path d="M30 14h1v5h-1z M29 17h3v1h-3z M28 16h1v1h-1z M32 16h1v1h-1z" fill="#e00000"/></svg>
<svg style="position:absolute;left:680px;top:460px" width="35" height="30" viewBox="0 0 35 30"><rect width="35" height="30" fill="#fff"/><path d="M0 0 H35 L34 1.6 H1.6 V29 L0 30 Z" fill="#7a7a7a"/><rect x="1.6" y="1.6" width="32.4" height="27.4" fill="#b6ffa4"/><path d="M2 11.5 H34" stroke="#0000ff" stroke-width="1"/><path d="M4 26.5 L21.5 12" stroke="#f00000" stroke-width="4" stroke-linecap="butt" fill="none"/><path d="M20 5h1v5h-1z M19 6h3v1h-3z M18 7h1v1h-1z M22 7h1v1h-1z" fill="#e00000"/></svg>
<svg style="position:absolute;left:680px;top:494px" width="35" height="30" viewBox="0 0 35 30"><rect width="35" height="30" fill="#fff"/><path d="M0 0 H35 L34 1.6 H1.6 V29 L0 30 Z" fill="#7a7a7a"/><rect x="1.6" y="1.6" width="32.4" height="27.4" fill="#b6ffa4"/><path d="M2 25.5 H34" stroke="#0000ff" stroke-width="1"/><path d="M4.5 7 L24 24.5" stroke="#f00000" stroke-width="4" stroke-linecap="butt" fill="none"/><path d="M27 15h1v5h-1z M26 18h3v1h-3z M25 17h1v1h-1z M29 17h1v1h-1z" fill="#e00000"/></svg>
<div class="t" style="left:740.5px;top:399px;letter-spacing:-0.953px;">THR</div>
<div class="t" style="left:771.6px;top:399px;letter-spacing:-0.459px;">BRK</div>
<div style="position:absolute;left:740px;top:412px;width:23px;height:113px;background:#fff;box-shadow:inset 1px 0 0 #a0a0a0, inset -1px 0 0 #a0a0a0"></div><div class="btn" style="left:740px;top:412px;width:23px;height:17px"><i class="up" style="left:8px;top:6px"></i></div><div class="btn" style="left:740px;top:495px;width:23px;height:12px"></div><div class="btn" style="left:740px;top:508px;width:23px;height:17px"><i class="dn" style="left:8px;top:7px"></i></div>
<div style="position:absolute;left:770px;top:412px;width:23px;height:113px;background:#fff;box-shadow:inset 1px 0 0 #a0a0a0, inset -1px 0 0 #a0a0a0"></div><div class="btn" style="left:770px;top:412px;width:23px;height:17px"><i class="up" style="left:8px;top:6px"></i></div><div class="btn" style="left:770px;top:495px;width:23px;height:12px"></div><div class="btn" style="left:770px;top:508px;width:23px;height:17px"><i class="dn" style="left:8px;top:7px"></i></div>
<div class="t" style="left:744.2px;top:528px;letter-spacing:0.202px;">0%</div>
<div class="t" style="left:774.2px;top:528px;letter-spacing:0.202px;">0%</div>
<div class="grp" style="left:802px;top:407px;width:128px;height:93px"></div><div style="position:absolute;left:809px;top:407px;width:50px;height:2px;background:#f0f0f0"></div><div class="t b" style="left:810.5px;top:401px;letter-spacing:0.398px;">Opname</div>
<div class="t" style="left:818.2px;top:415px;letter-spacing:-0.123px;">Max. aantal testen</div>
<div class="edit" style="left:840px;top:430px;width:42px;height:21px;background:#fff"></div><div class="t" style="left:820px;width:60px;text-align:right;top:434px;">15</div>
<div class="btn" style="left:822px;top:456px;width:81px;height:37px;background:#80ff80"></div>
<div class="t" style="left:851px;top:468px;letter-spacing:0.093px;">Start</div>
<div class="chk" style="left:808px;top:516px"><svg width="13" height="13" viewBox="0 0 13 13" style="position:absolute;left:0;top:0"><path d="M3 5h1v3h-1zM4 6h1v3h-1zM5 7h1v3h-1zM6 6h1v3h-1zM7 5h1v3h-1zM8 4h1v3h-1zM9 3h1v3h-1z" fill="#000" shape-rendering="crispEdges"/></svg></div>
<div class="t" style="left:826px;top:509px;letter-spacing:-0.137px;">Close Throttle at the</div>
<div class="t" style="left:826px;top:523px;letter-spacing:-0.043px;">end of Test</div>
</div>
</body></html>
